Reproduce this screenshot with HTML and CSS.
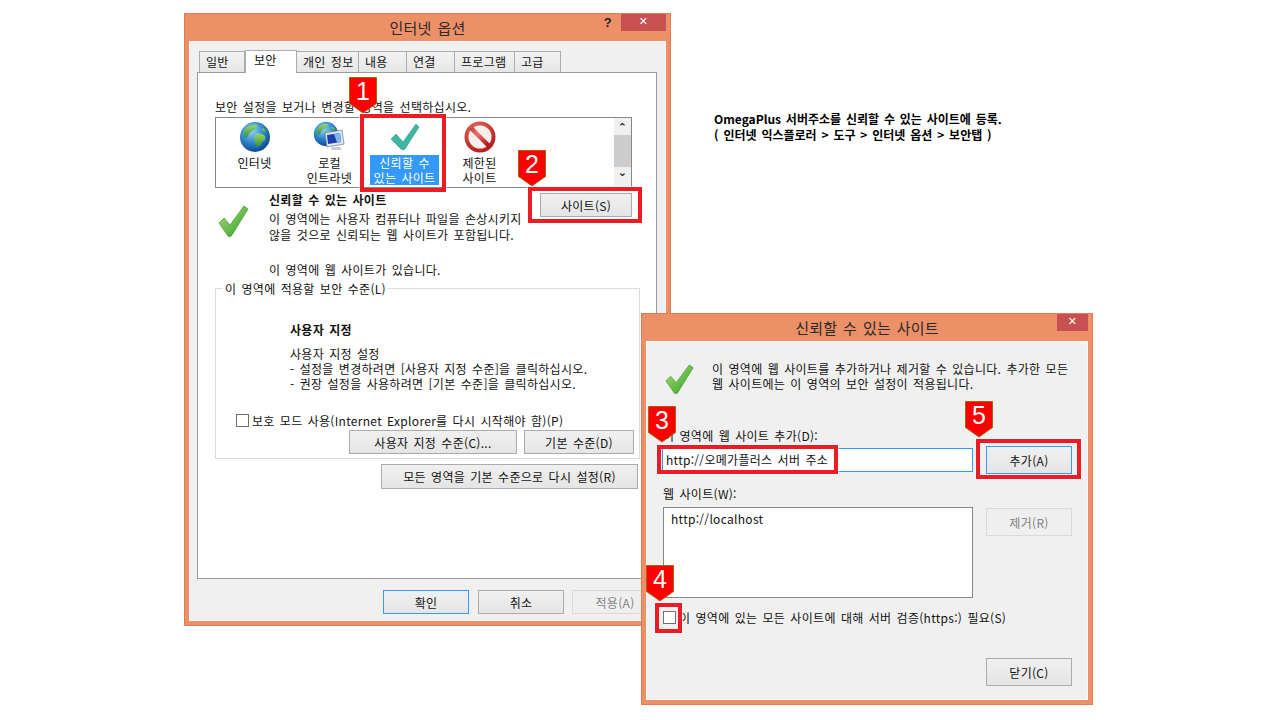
FILE: index.html
```html
<!DOCTYPE html>
<html lang="ko">
<head>
<meta charset="utf-8">
<title>OmegaPlus</title>
<link rel="stylesheet" href="styles.css">
</head>
<body>
<svg class="defs" width="0" height="0">
  <defs>
    <radialGradient id="ocean" cx="40%" cy="30%" r="75%">
      <stop offset="0" stop-color="#8fd0f5"/><stop offset=".55" stop-color="#2a83c8"/><stop offset="1" stop-color="#0b3f8a"/>
    </radialGradient>
    <linearGradient id="land" x1="0" y1="0" x2="0" y2="1">
      <stop offset="0" stop-color="#9ad86a"/><stop offset="1" stop-color="#2f8f3a"/>
    </linearGradient>
    <linearGradient id="green" x1="0" y1="0" x2="1" y2="1">
      <stop offset="0" stop-color="#a8e070"/><stop offset="1" stop-color="#2f9e2a"/>
    </linearGradient>
    <radialGradient id="noentry" cx="40%" cy="30%" r="80%">
      <stop offset="0" stop-color="#f27a70"/><stop offset="1" stop-color="#b01818"/>
    </radialGradient>
    <symbol id="globe" viewBox="0 0 32 32">
      <circle cx="16" cy="16" r="15" fill="url(#ocean)"/>
      <path d="M7 7c3-3 8-4 11-3 1 2-1 3-3 4-1 3-4 2-5 5-1 2-2 4-4 4-2-3-1-7 1-10z" fill="url(#land)"/>
      <path d="M17 13c3-1 7 0 9 2 1 3 0 5-3 6-1 3-3 5-5 5-1-3-3-5-3-8 0-2 1-4 2-5z" fill="url(#land)"/>
      <path d="M24 7c2 1 3 3 4 5-2 0-4-1-5-3z" fill="url(#land)"/>
    </symbol>
    <symbol id="check" viewBox="0 0 32 34">
      <path d="M2 19l5-5 6 7L27 2l4 3-16 26c-1 2-3 2-4 1z" fill="url(#green)" stroke="#4f9e35" stroke-width=".8"/>
    </symbol>
  </defs>
</svg>

<section class="win win-options">
  <header class="titlebar">
    <h1 class="title">인터넷 옵션</h1>
    <span class="help">?</span>
    <span class="close close-wide">✕</span>
  </header>
  <div class="client client-options">
    <nav class="tabs">
      <span class="tab tab-a">일반</span>
      <span class="tab tab-b tab-on">보안</span>
      <span class="tab tab-c">개인 정보</span>
      <span class="tab tab-d">내용</span>
      <span class="tab tab-d">연결</span>
      <span class="tab tab-e">프로그램</span>
      <span class="tab tab-f">고급</span>
    </nav>
    <div class="panel">
      <p class="line intro">보안 설정을 보거나 변경할 영역을 선택하십시오.</p>
      <div class="zones">
        <div class="zone">
          <svg class="zone-icon" width="32" height="32"><use href="#globe"/></svg>
          <span class="zone-label">인터넷</span>
        </div>
        <div class="zone">
          <svg class="zone-icon" width="34" height="32" viewBox="0 0 34 32">
            <use href="#globe" width="26" height="26"/>
            <path d="M12 12l17-3 2 14-17 3z" fill="#dfe6f0" stroke="#7d8794" stroke-width=".8"/>
            <path d="M14 14l13-2 1 9-13 2z" fill="#1c3fae"/>
            <path d="M21 13l6-1 1 9-4 .6z" fill="#7fb4ec"/>
            <path d="M19 26h8l2 3H18z" fill="#c8ccd2"/>
          </svg>
          <span class="zone-label">로컬<br>인트라넷</span>
        </div>
        <div class="zone">
          <svg class="zone-icon" width="32" height="32" viewBox="0 0 32 32">
            <path d="M2 18l5-5 7 8L27 3l3 3-14 22c-1 1-3 1-4 0z" fill="#3fb5a3" stroke="#2f9486" stroke-width=".6"/>
          </svg>
          <span class="zone-label zone-on">신뢰할 수<br>있는 사이트</span>
        </div>
        <div class="zone">
          <svg class="zone-icon" width="32" height="32" viewBox="0 0 32 32">
            <circle cx="16" cy="16" r="13.5" fill="#f7eeee" stroke="url(#noentry)" stroke-width="4"/>
            <path d="M7 7l18 18" stroke="url(#noentry)" stroke-width="4.5"/>
          </svg>
          <span class="zone-label">제한된<br>사이트</span>
        </div>
        <div class="scrollbar">
          <span class="arrow">⌃</span>
          <span class="thumb"></span>
          <span class="arrow arrow-down">⌄</span>
        </div>
      </div>
      <div class="info">
        <svg class="info-icon" width="32" height="34"><use href="#check"/></svg>
        <div class="info-text">
          <p class="line bold">신뢰할 수 있는 사이트</p>
          <p class="line desc">이 영역에는 사용자 컴퓨터나 파일을 손상시키지<br>않을 것으로 신뢰되는 웹 사이트가 포함됩니다.</p>
          <p class="line has-sites">이 영역에 웹 사이트가 있습니다.</p>
        </div>
        <button class="btn btn-sites">사이트(S)</button>
      </div>
      <div class="group">
        <span class="legend">이 영역에 적용할 보안 수준(L)</span>
        <div class="level">
          <p class="line bold">사용자 지정</p>
          <p class="line level-desc">사용자 지정 설정<br>- 설정을 변경하려면 [사용자 지정 수준]을 클릭하십시오.<br>- 권장 설정을 사용하려면 [기본 수준]을 클릭하십시오.</p>
        </div>
        <label class="check-row check-protect"><span class="box"></span><span class="line">보호 모드 사용(Internet Explorer를 다시 시작해야 함)(P)</span></label>
        <div class="level-btns">
          <button class="btn btn-custom">사용자 지정 수준(C)...</button>
          <button class="btn btn-default">기본 수준(D)</button>
        </div>
      </div>
      <button class="btn btn-reset">모든 영역을 기본 수준으로 다시 설정(R)</button>
    </div>
    <div class="footer">
      <button class="btn btn-foot btn-focus">확인</button>
      <button class="btn btn-foot">취소</button>
      <button class="btn btn-foot btn-off">적용(A)</button>
    </div>
  </div>
</section>

<p class="note">OmegaPlus 서버주소를 신뢰할 수 있는 사이트에 등록.<br>( 인터넷 익스플로러 &gt; 도구 &gt; 인터넷 옵션 &gt; 보안탭 )</p>

<section class="win win-trusted">
  <header class="titlebar">
    <h2 class="title">신뢰할 수 있는 사이트</h2>
    <span class="close close-narrow">✕</span>
  </header>
  <div class="client client-trusted">
    <div class="trusted-head">
      <svg class="trusted-icon" width="30" height="32"><use href="#check"/></svg>
      <p class="line">이 영역에 웹 사이트를 추가하거나 제거할 수 있습니다. 추가한 모든<br>웹 사이트에는 이 영역의 보안 설정이 적용됩니다.</p>
    </div>
    <p class="line add-label">이 영역에 웹 사이트 추가(D):</p>
    <div class="add-row">
      <div class="input">http://오메가플러스 서버 주소</div>
      <button class="btn btn-wide btn-focus">추가(A)</button>
    </div>
    <p class="line sites-label">웹 사이트(W):</p>
    <div class="list-row">
      <div class="list">http://localhost</div>
      <button class="btn btn-wide btn-off btn-remove">제거(R)</button>
    </div>
    <label class="check-row check-https"><span class="box"></span><span class="line">이 영역에 있는 모든 사이트에 대해 서버 검증(https:) 필요(S)</span></label>
    <button class="btn btn-wide btn-close">닫기(C)</button>
  </div>
</section>

<div class="redbox rb1"></div>
<div class="redbox rb2"></div>
<div class="redbox rb3"></div>
<div class="redbox rb4"></div>
<div class="redbox rb5"></div>

<div class="marker m1"><svg width="29" height="37" viewBox="0 0 29 37"><path class="pin" d="M.5.5h27v26L14 36 .5 26.5z"/></svg><span class="digit">1</span></div>
<div class="marker m2"><svg width="29" height="37" viewBox="0 0 29 37"><path class="pin" d="M.5.5h27v26L14 36 .5 26.5z"/></svg><span class="digit">2</span></div>
<div class="marker m3"><svg width="29" height="37" viewBox="0 0 29 37"><path class="pin" d="M.5.5h27v26L14 36 .5 26.5z"/></svg><span class="digit">3</span></div>
<div class="marker m4"><svg width="29" height="37" viewBox="0 0 29 37"><path class="pin" d="M.5.5h27v26L14 36 .5 26.5z"/></svg><span class="digit">4</span></div>
<div class="marker m5"><svg width="29" height="37" viewBox="0 0 29 37"><path class="pin" d="M.5.5h27v26L14 36 .5 26.5z"/></svg><span class="digit">5</span></div>
</body>
</html>
```

FILE: styles.css
```css
* { box-sizing: border-box; }
html, body { margin: 0; height: 100%; }
body {
  position: relative;
  width: 1280px;
  height: 720px;
  overflow: hidden;
  background: #fff;
  color: #111;
  font-family: "Noto Sans CJK KR", "Open Sans", sans-serif;
  font-size: 12px;
  line-height: 15px;
  word-spacing: 1.5px;
  letter-spacing: .3px;
}
p, h1, h2 { margin: 0; font-weight: normal; }
.defs { position: absolute; }
.line { white-space: nowrap; }
.bold { font-weight: 700; }

/* windows on the canvas */
.win {
  position: absolute;
  display: flex;
  flex-direction: column;
  border: 1px solid #e07c52;
  background: #ec9068;
  padding: 0 4px 4px;
}
.win-options { left: 184px; top: 13px; width: 487px; height: 613px; }
.win-trusted { left: 641px; top: 313px; width: 452px; height: 392px; }

.titlebar {
  position: relative;
  flex: none;
  height: 27px;
  display: flex;
  align-items: center;
  justify-content: center;
}
.title { font-size: 15px; color: #2a2a2a; letter-spacing: .2px; }
.help {
  position: absolute;
  top: 0; right: 54px;
  font: 700 13px/17px "Liberation Sans", sans-serif;
  color: #222;
}
.close {
  position: absolute;
  top: 0; right: 0;
  height: 17px;
  background: #c75050;
  color: #fff;
  font: 700 11px/16px "DejaVu Sans", sans-serif;
  text-align: center;
}
.close-wide { width: 45px; }
.close-narrow { width: 31px; }

.client {
  flex: 1;
  background: #f0f0f0;
  border: 1px solid #fbfbfb;
}
.client-options { padding: 8px 0 0 7px; }

/* tabs */
.tabs { display: flex; height: 22px; padding-left: 2px; align-items: flex-end; }
.tab {
  height: 21px;
  margin-bottom: 0;
  border: 1px solid #acacac;
  border-bottom: 0;
  border-left-width: 0;
  background: linear-gradient(#f3f3f3, #e6e6e6);
  padding-left: 6px;
  line-height: 19px;
  white-space: nowrap;
}
.tab-a { width: 46px; border-left-width: 1px; }
.tab-b { width: 52px; }
.tab-c { width: 62px; }
.tab-d { width: 48px; }
.tab-e { width: 60px; }
.tab-f { width: 46px; }
.tab-on {
  position: relative;
  z-index: 1;
  height: 23px;
  margin-bottom: -1px;
  background: #fff;
  border-left-width: 1px;
  padding-left: 8px;
  line-height: 17px;
}

.panel {
  width: 460px;
  height: 507px;
  background: #fff;
  border: 1px solid #9c9c9c;
  padding: 26px 0 0 17px;
}
.intro { height: 15px; }

.zones {
  display: flex;
  width: 417px;
  height: 71px;
  margin-top: 3px;
  padding: 0 0 0 1px;
  border: 1px solid #828790;
  position: relative;
}
.zone {
  width: 75px;
  display: flex;
  flex-direction: column;
  align-items: center;
  padding-top: 3px;
  text-align: center;
}
.zone-icon { flex: none; height: 32px; }
.zone-label { margin-top: 2px; white-space: nowrap; line-height: 15px; }
.zone-on { background: #3399ff; color: #fff; width: 69px; padding-bottom: 0; height: 30px; }
.scrollbar {
  margin-left: auto;
  width: 17px;
  margin-right: 0;
  display: flex;
  flex-direction: column;
  background: #f0f0f0;
  color: #222;
  text-align: center;
}
.arrow { height: 17px; font: 700 11px/20px "DejaVu Sans", sans-serif; }
.arrow-down { height: 20px; line-height: 12px; }
.thumb { height: 32px; background: #cdcdcd; }

.info { display: flex; width: 417px; height: 100px; }
.info-icon { flex: none; margin: 16px 20px 0 2px; }
.info-text { padding-top: 4px; width: 271px; flex: none; }
.desc { margin-top: 4px; line-height: 16px; }
.has-sites { margin-top: 19px; }
.btn {
  display: block;
  margin: 0;
  padding: 0;
  border: 1px solid #acacac;
  background: linear-gradient(#f0f0f0, #e5e5e5);
  color: #111;
  font: inherit;
  letter-spacing: inherit;
  word-spacing: inherit;
  white-space: nowrap;
  text-align: center;
}
.btn-sites { flex: none; width: 92px; height: 24px; margin-top: 5px; }

.group {
  position: relative;
  width: 425px;
  height: 171px;
  border: 1px solid #dcdcdc;
}
.legend {
  position: absolute;
  left: 7px; top: -8px;
  background: #fff;
  padding: 0 2px;
  white-space: nowrap;
}
.level { padding: 33px 0 0 74px; }
.level-desc { margin-top: 9px; }
.check-row { display: flex; align-items: center; }
.box {
  flex: none;
  width: 13px; height: 13px;
  background: #fff;
  border: 1px solid #707070;
}
.check-row .line { margin-left: 3px; }
.check-protect { margin: 22px 0 0 20px; }
.level-btns { display: flex; gap: 7px; margin: 2px 0 0 133px; }
.btn-custom { width: 168px; height: 24px; }
.btn-default { width: 110px; height: 24px; }
.btn-reset { width: 257px; height: 25px; margin: 5px 0 0 166px; }

.footer { display: flex; gap: 8px; margin: 11px 0 0 186px; }
.btn-foot { flex: none; width: 86px; height: 24px; }
.btn-foot + .btn-foot:nth-child(2) { margin-left: 1px; }
.btn-focus { border-color: #3399ff; }
.btn-off { border-color: #d9d9d9; background: #efefef; color: #838383; }

/* second dialog */
.client-trusted { padding: 19px 0 0 16px; }
.trusted-head { display: flex; height: 30px; }
.trusted-icon { flex: none; margin: 2px 18px 0 1px; }
.add-label { margin-top: 37px; }
.add-row { display: flex; align-items: center; gap: 13px; margin: 3px 0 0 -1px; height: 28px; }
.input {
  width: 311px; height: 24px;
  background: #fff;
  border: 1px solid #3399ff;
  padding-left: 3px;
  line-height: 22px;
  white-space: nowrap;
}
.btn-wide { flex: none; width: 86px; height: 28px; }
.sites-label { margin-top: 12px; }
.list-row { display: flex; gap: 13px; margin-top: 6px; }
.list {
  width: 310px; height: 91px;
  background: #fff;
  border: 1px solid #828790;
  padding: 3px 0 0 7px;
}
.btn-remove { margin-top: 1px; }
.check-https { margin-top: 12px; }
.btn-close { margin: 33px 0 0 323px; }

/* note */
.note {
  position: absolute;
  left: 714px; top: 111px;
  font-weight: 700;
  line-height: 16px;
  white-space: nowrap;
  color: #000;
  letter-spacing: 0;
}

/* annotations */
.redbox {
  position: absolute;
  border: 4px solid #ed1c24;
  box-shadow: 0 0 0 1px rgba(255,255,255,.6);
}
.rb1 { left: 360px; top: 114px; width: 86px; height: 78px; }
.rb2 { left: 528px; top: 187px; width: 114px; height: 36px; }
.rb3 { left: 657px; top: 445px; width: 181px; height: 29px; }
.rb4 { left: 655px; top: 603px; width: 27px; height: 30px; }
.rb5 { left: 976px; top: 439px; width: 105px; height: 40px; }

.marker { position: absolute; width: 29px; height: 37px; }
.marker svg { display: block; }
.pin { fill: #ff0000; stroke: #a5650a; stroke-width: 1; }
.digit {
  position: absolute;
  left: 0; top: 2px;
  width: 28px;
  text-align: center;
  color: #fff;
  font: 25px/24px "Liberation Sans", sans-serif;
}
.m1 { left: 349px; top: 77px; }
.m2 { left: 518px; top: 150px; }
.m3 { left: 648px; top: 406px; }
.m4 { left: 646px; top: 565px; }
.m5 { left: 965px; top: 401px; }
```
